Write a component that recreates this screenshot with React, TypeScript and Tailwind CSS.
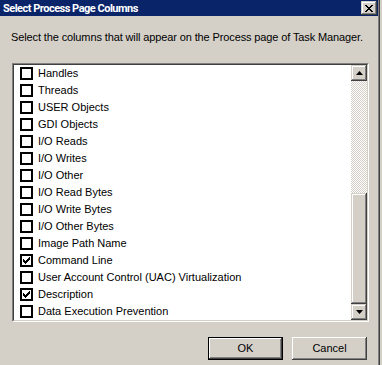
const columns = [
  { label: 'Handles', checked: false },
  { label: 'Threads', checked: false },
  { label: 'USER Objects', checked: false },
  { label: 'GDI Objects', checked: false },
  { label: 'I/O Reads', checked: false },
  { label: 'I/O Writes', checked: false },
  { label: 'I/O Other', checked: false },
  { label: 'I/O Read Bytes', checked: false },
  { label: 'I/O Write Bytes', checked: false },
  { label: 'I/O Other Bytes', checked: false },
  { label: 'Image Path Name', checked: false },
  { label: 'Command Line', checked: true },
  { label: 'User Account Control (UAC) Virtualization', checked: false },
  { label: 'Description', checked: true },
  { label: 'Data Execution Prevention', checked: false },
];

const raised =
  'bg-[#d4d0c8] shadow-[inset_-1px_-1px_#404040,inset_1px_1px_#d4d0c8,inset_-2px_-2px_#808080,inset_2px_2px_#ffffff]';

function CheckBox({ checked }: { checked: boolean }) {
  return (
    <div className="flex h-[13px] w-[13px] shrink-0 items-center justify-center border-2 border-black bg-white">
      {checked && (
        <svg width="9" height="9" viewBox="0 0 9 9">
          <path d="M1 3h1v3h-1zM2 4h1v3h-1zM3 5h1v3h-1zM4 4h1v3h-1zM5 3h1v3h-1zM6 2h1v3h-1zM7 1h1v3h-1z" fill="black" />
        </svg>
      )}
    </div>
  );
}

function Arrow({ up }: { up?: boolean }) {
  return (
    <svg width="7" height="4" viewBox="0 0 7 4">
      <polygon points={up ? '3.5,0 7,4 0,4' : '0,0 7,0 3.5,4'} fill="black" />
    </svg>
  );
}

function Button({ label, isDefault }: { label: string; isDefault?: boolean }) {
  return (
    <div className={isDefault ? 'border border-black' : ''}>
      <div
        className={`flex items-center justify-center bg-[#d4d0c8] text-[11px] text-black ${
          isDefault ? 'h-[21px] w-[73px]' : 'h-[23px] w-[75px]'
        } shadow-[inset_-1px_-1px_#404040,inset_1px_1px_#ffffff,inset_-2px_-2px_#808080,inset_2px_2px_#d4d0c8]`}
      >
        {label}
      </div>
    </div>
  );
}

export default function App() {
  return (
    <div
      className="flex h-[365px] w-[382px] bg-[#d4d0c8]"
      style={{ fontFamily: '"Liberation Sans", Arial, sans-serif' }}
    >
      <div className="flex w-[378px] flex-col">
        {/* title bar */}
        <div className="flex h-[16px] items-center justify-between bg-[#0a246a] pl-[3px] pr-[1px]">
          <span className="font-['Roboto',sans-serif] text-[11px] font-bold leading-none tracking-[-0.5px] text-white">
            Select Process Page Columns
          </span>
          <div className={`flex h-[14px] w-[16px] items-center justify-center ${raised}`}>
            <svg width="8" height="7" viewBox="0 0 8 7">
              <path d="M0 0h2v1h-2zM6 0h2v1h-2zM1 1h2v1h-2zM5 1h2v1h-2zM2 2h4v1h-4zM3 3h2v1h-2zM2 4h4v1h-4zM1 5h2v1h-2zM5 5h2v1h-2zM0 6h2v1h-2zM6 6h2v1h-2z" fill="black" />
            </svg>
          </div>
        </div>

        <p className="mt-[15px] pl-[11px] text-[11px] leading-[13px] tracking-[-0.12px] text-black">
          Select the columns that will appear on the Process page of Task Manager.
        </p>

        {/* list box */}
        <div className="ml-[12px] mt-[19px] w-[357px] border-l border-t border-[#808080] border-b border-r border-b-white border-r-white">
          <div className="flex h-[257px] border-l border-t border-[#404040] border-b border-r border-b-[#d4d0c8] border-r-[#d4d0c8] bg-white">
            <div className="flex flex-1 flex-col">
              {columns.map((c) => (
                <div key={c.label} className="flex h-[17px] items-center gap-[5px] pl-[6px]">
                  <CheckBox checked={c.checked} />
                  <span className="whitespace-nowrap text-[11px] text-black">{c.label}</span>
                </div>
              ))}
            </div>
            <div className="flex w-[16px] flex-col">
              <div className={`flex h-[16px] items-center justify-center ${raised}`}>
                <Arrow up />
              </div>
              <div className="flex flex-1 flex-col justify-end bg-[repeating-conic-gradient(#ffffff_0%_25%,#d4d0c8_0%_50%)] bg-[length:2px_2px]">
                <div className={`h-[111px] ${raised}`} />
              </div>
              <div className={`flex h-[16px] items-center justify-center ${raised}`}>
                <Arrow />
              </div>
            </div>
          </div>
        </div>

        <div className="mt-[15px] flex justify-end gap-[9px] pr-[11px]">
          <Button label="OK" isDefault />
          <Button label="Cancel" />
        </div>
      </div>
      <div className="w-px bg-[#808080]" />
      <div className="w-px bg-[#404040]" />
      <div className="flex-1" />
    </div>
  );
}
